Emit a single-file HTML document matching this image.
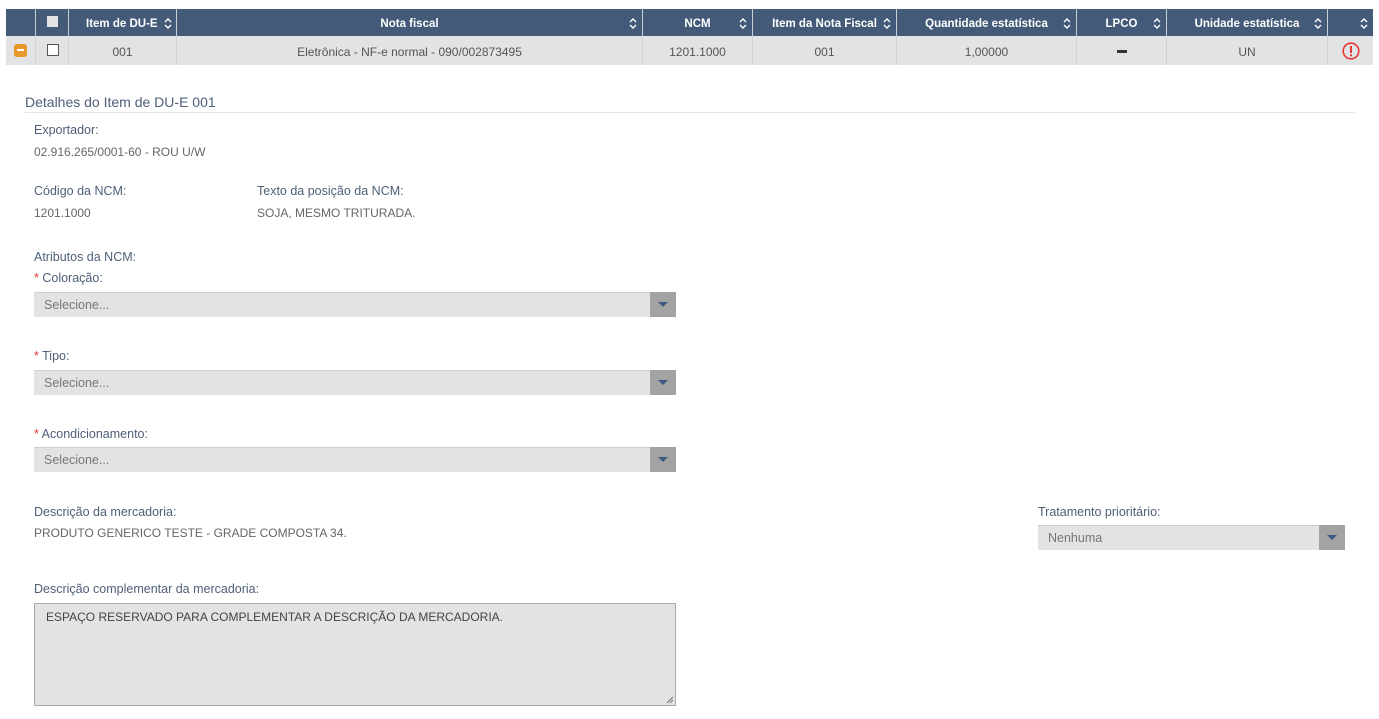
<!DOCTYPE html>
<html><head><meta charset="utf-8"><style>
*{margin:0;padding:0;box-sizing:border-box}
body{width:1379px;height:719px;background:#fff;font-family:"Liberation Sans",sans-serif;font-size:12.5px;position:relative;overflow:hidden}
.a{position:absolute;white-space:nowrap}
.hd{position:absolute;top:9px;height:27px;background:#435a78;color:#fff;font-weight:bold;font-size:11.5px;line-height:30px;text-align:center;border-right:1px solid #c8d0da}
.rw{position:absolute;top:36px;height:29px;background:#e2e3e5;color:#555;line-height:32px;text-align:center;border-right:1px solid #cfd1d4;font-size:12px}
.sort{position:absolute;right:5px;top:9px;width:8px;height:11px}
.lbl{color:#4e5f78}
.val{color:#666;font-size:12px}
.star{color:#e53935}
.sel{position:absolute;height:25px;background:#e2e3e5;border-top:1px solid #cfcfcf;color:#777;line-height:24px;padding-left:10px}
.sel .ar{position:absolute;right:0;top:-1px;width:26px;height:25px;background:#a3a3a3}
.sel .ar:after{content:"";position:absolute;left:8px;top:10px;border-left:5px solid transparent;border-right:5px solid transparent;border-top:5px solid #3d5a82}
</style></head><body>
<svg width="0" height="0" style="position:absolute"><defs><symbol id="s" viewBox="0 0 8 11"><path d="M1 4 L4 1 L7 4 M1 7 L4 10 L7 7" fill="none" stroke="#fff" stroke-width="1.4"/></symbol></defs></svg>
<div class="hd" style="left:6px;width:30px"></div>
<div class="hd" style="left:36px;width:33px"><span style="position:absolute;left:11px;top:7px;width:11px;height:11px;background:#e2e3e5"></span></div>
<div class="hd" style="left:69px;width:108px;text-align:left;padding-left:17px">Item de DU-E<svg class="sort" style="right:4px"><use href="#s"/></svg></div>
<div class="hd" style="left:177px;width:466px">Nota fiscal<svg class="sort"><use href="#s"/></svg></div>
<div class="hd" style="left:643px;width:110px">NCM<svg class="sort"><use href="#s"/></svg></div>
<div class="hd" style="left:753px;width:144px">Item da Nota Fiscal<svg class="sort"><use href="#s"/></svg></div>
<div class="hd" style="left:897px;width:180px">Quantidade estatística<svg class="sort"><use href="#s"/></svg></div>
<div class="hd" style="left:1077px;width:90px">LPCO<svg class="sort"><use href="#s"/></svg></div>
<div class="hd" style="left:1167px;width:161px">Unidade estatística<svg class="sort"><use href="#s"/></svg></div>
<div class="hd" style="left:1328px;width:45px;border-right:none"><svg class="sort"><use href="#s"/></svg></div>

<div class="rw" style="left:6px;width:30px"><span style="position:absolute;left:8px;top:8px;width:13px;height:13px;background:#e8972a;border-radius:3px"><span style="position:absolute;left:3px;top:5px;width:7px;height:2px;background:#fff"></span></span></div>
<div class="rw" style="left:36px;width:33px"><span style="position:absolute;left:11px;top:8px;width:12px;height:12px;border:1px solid #555;background:#fff"></span></div>
<div class="rw" style="left:69px;width:108px">001</div>
<div class="rw" style="left:177px;width:466px">Eletrônica - NF-e normal - 090/002873495</div>
<div class="rw" style="left:643px;width:110px">1201.1000</div>
<div class="rw" style="left:753px;width:144px">001</div>
<div class="rw" style="left:897px;width:180px">1,00000</div>
<div class="rw" style="left:1077px;width:90px"><span style="position:absolute;left:40px;top:14px;width:10px;height:3px;background:#333"></span></div>
<div class="rw" style="left:1167px;width:161px">UN</div>
<div class="rw" style="left:1328px;width:45px;border-right:none"><svg style="position:absolute;left:14px;top:6px" width="18" height="18" viewBox="0 0 18 18"><circle cx="9" cy="9" r="7.8" fill="none" stroke="#e53935" stroke-width="1.6"/><rect x="8" y="4" width="2" height="7" fill="#e53935"/><rect x="8" y="12.3" width="2" height="2" fill="#e53935"/></svg></div>

<div class="a lbl" style="left:25px;top:94px;font-size:14px">Detalhes do Item de DU-E 001</div>
<div class="a" style="left:25px;top:112px;width:1330px;height:1px;background:#e5e5e5"></div>

<div class="a lbl" style="left:34px;top:123px">Exportador:</div>
<div class="a val" style="left:34px;top:145px">02.916.265/0001-60 - ROU U/W</div>
<div class="a lbl" style="left:34px;top:184px">Código da NCM:</div>
<div class="a val" style="left:34px;top:206px">1201.1000</div>
<div class="a lbl" style="left:257px;top:184px">Texto da posição da NCM:</div>
<div class="a val" style="left:257px;top:206px">SOJA, MESMO TRITURADA.</div>
<div class="a lbl" style="left:34px;top:250px">Atributos da NCM:</div>

<div class="a lbl" style="left:34px;top:271px"><span class="star">*</span> Coloração:</div>
<div class="sel" style="left:34px;top:292px;width:642px">Selecione...<span class="ar"></span></div>
<div class="a lbl" style="left:34px;top:349px"><span class="star">*</span> Tipo:</div>
<div class="sel" style="left:34px;top:370px;width:642px">Selecione...<span class="ar"></span></div>
<div class="a lbl" style="left:34px;top:427px"><span class="star">*</span> Acondicionamento:</div>
<div class="sel" style="left:34px;top:447px;width:642px">Selecione...<span class="ar"></span></div>

<div class="a lbl" style="left:34px;top:505px">Descrição da mercadoria:</div>
<div class="a val" style="left:34px;top:526px">PRODUTO GENERICO TESTE - GRADE COMPOSTA 34.</div>
<div class="a lbl" style="left:1038px;top:505px">Tratamento prioritário:</div>
<div class="sel" style="left:1038px;top:525px;width:307px">Nenhuma<span class="ar"></span></div>

<div class="a lbl" style="left:34px;top:582px">Descrição complementar da mercadoria:</div>
<div class="a" style="left:34px;top:603px;width:642px;height:103px;background:#e2e3e5;border:1px solid #aaa"><span class="a" style="left:11px;top:6px;color:#444;font-size:12px">ESPAÇO RESERVADO PARA COMPLEMENTAR A DESCRIÇÃO DA MERCADORIA.</span>
<svg class="a" style="right:1px;bottom:1px" width="8" height="8"><path d="M7 1 L1 7 M7 4 L4 7" stroke="#777" stroke-width="1"/></svg></div>
</body></html>
